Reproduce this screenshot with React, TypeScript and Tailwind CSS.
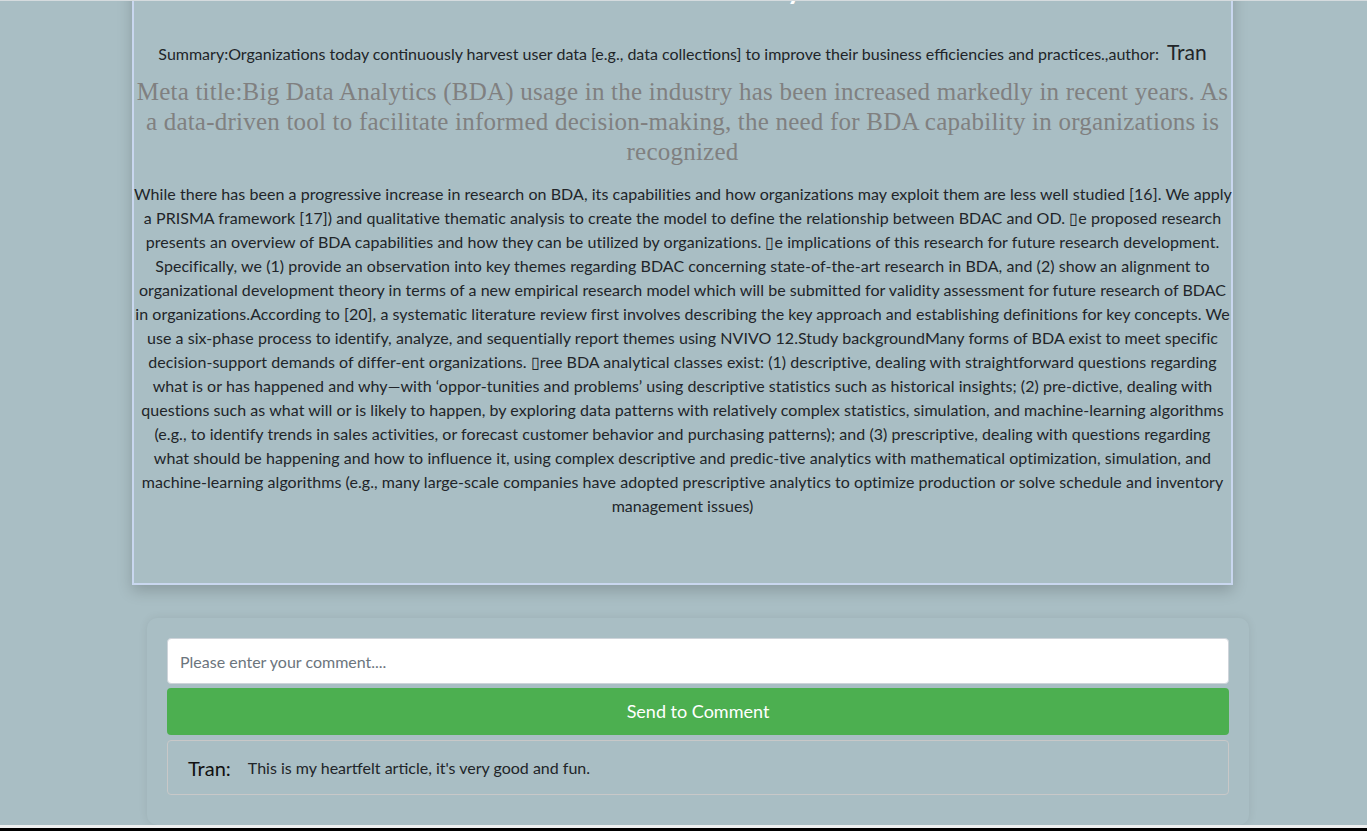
export default function App() {
  const bodyLines = [
    "While there has been a progressive increase in research on BDA, its capabilities and how organizations may exploit them are less well studied [16]. We apply",
    "a PRISMA framework [17]) and qualitative thematic analysis to create the model to define the relationship between BDAC and OD. ▯e proposed research",
    "presents an overview of BDA capabilities and how they can be utilized by organizations. ▯e implications of this research for future research development.",
    "Specifically, we (1) provide an observation into key themes regarding BDAC concerning state-of-the-art research in BDA, and (2) show an alignment to",
    "organizational development theory in terms of a new empirical research model which will be submitted for validity assessment for future research of BDAC",
    "in organizations.According to [20], a systematic literature review first involves describing the key approach and establishing definitions for key concepts. We",
    "use a six-phase process to identify, analyze, and sequentially report themes using NVIVO 12.Study backgroundMany forms of BDA exist to meet specific",
    "decision-support demands of differ-ent organizations. ▯ree BDA analytical classes exist: (1) descriptive, dealing with straightforward questions regarding",
    "what is or has happened and why—with ‘oppor-tunities and problems’ using descriptive statistics such as historical insights; (2) pre-dictive, dealing with",
    "questions such as what will or is likely to happen, by exploring data patterns with relatively complex statistics, simulation, and machine-learning algorithms",
    "(e.g., to identify trends in sales activities, or forecast customer behavior and purchasing patterns); and (3) prescriptive, dealing with questions regarding",
    "what should be happening and how to influence it, using complex descriptive and predic-tive analytics with mathematical optimization, simulation, and",
    "machine-learning algorithms (e.g., many large-scale companies have adopted prescriptive analytics to optimize production or solve schedule and inventory",
    "management issues)",
  ];

  const metaLines = [
    "Meta title:Big Data Analytics (BDA) usage in the industry has been increased markedly in recent years. As",
    "a data-driven tool to facilitate informed decision-making, the need for BDA capability in organizations is",
    "recognized",
  ];

  return (
    <div className="min-h-screen overflow-hidden bg-[#a9bec4] border-t border-[#d5dbde] font-['Lato',sans-serif] text-[#212529]">
      {/* article */}
      <div className="ml-[132px] w-[1101px] -mt-[43px] border-2 border-[#c9d7ef] shadow-[0_6px_14px_rgba(0,0,0,0.18)] pb-[65px] text-center">
        <h1 className="h-[50px] text-[33px] leading-[50px] text-white font-semibold">Article Summary</h1>
        <p className="mt-[30px] text-[16px] leading-[24px]">
          Summary:Organizations today continuously harvest user data [e.g., data collections] to improve their business
          efficiencies and practices.,author:
          <span className="ml-[8px] text-[21px]">Tran</span>
        </p>
        <h2 className="mt-[11px] font-['Liberation_Serif',serif] text-[25px] leading-[30px] tracking-[0.22px] text-[#808080]">
          {metaLines.map((l, i) => (
            <span key={i} className="block whitespace-nowrap">
              {l}
            </span>
          ))}
        </h2>
        <p className="mt-[15px] text-[16px] leading-[24px] tracking-[0.05px]">
          {bodyLines.map((l, i) => (
            <span key={i} className="block whitespace-nowrap">
              {l}
            </span>
          ))}
        </p>
      </div>

      {/* comments */}
      <div className="ml-[147px] mt-[33px] w-[1102px] rounded-[10px] bg-[#a9bec4] shadow-[0_0_10px_rgba(0,0,0,0.08)] px-[20px] pt-[20px] pb-[30px]">
        <input
          className="block w-full h-[46px] rounded-[4px] border border-[#ced4da] bg-white px-[12px] text-[16px] placeholder:text-[#6c757d] outline-none"
          placeholder="Please enter your comment...."
        />
        <button className="mt-[4px] block w-full h-[47px] rounded-[4px] bg-[#4caf50] text-white text-[18px]">
          Send to Comment
        </button>
        <div className="mt-[5px] h-[55px] flex items-center rounded-[4px] border border-[#c8c8c8] px-[20px]">
          <span className="text-[20px] text-[#111]">Tran:</span>
          <span className="ml-[17px] text-[16px]">This is my heartfelt article, it's very good and fun.</span>
        </div>
      </div>

      <div className="h-[3px] bg-[#eef0f0]" />
      <div className="h-[40px] bg-black" />
    </div>
  );
}
